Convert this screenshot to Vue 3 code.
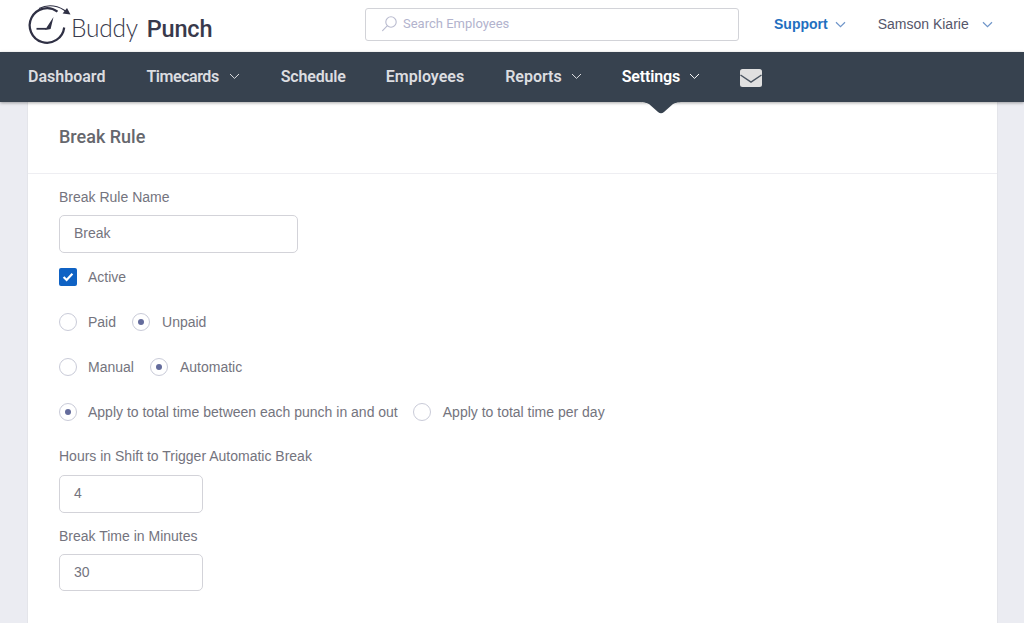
<script setup>
const navItems = [
  { label: 'Dashboard', caret: false, cls: 'first' },
  { label: 'Timecards', caret: true, cls: 'tight-lg' },
  { label: 'Schedule', caret: false, cls: 'tight-sm' },
  { label: 'Employees', caret: false, cls: 'first' },
  { label: 'Reports', caret: true, cls: 'near' },
  { label: 'Settings', caret: true, cls: 'active tight-sm near' }
]
const radioRows = [
  { tight: false, opts: [{ label: 'Paid', on: false }, { label: 'Unpaid', on: true }] },
  { tight: false, opts: [{ label: 'Manual', on: false }, { label: 'Automatic', on: true }] },
  { tight: true, opts: [{ label: 'Apply to total time between each punch in and out', on: true }, { label: 'Apply to total time per day', on: false }] }
]
</script>

<template>
  <div class="page">
    <header class="top">
      <div class="logo">
        <svg class="logo-mark" width="46" height="46" viewBox="0 0 46 46" fill="none">
          <path d="M31.5 8.7A17.3 17.3 0 1 0 38.2 24.5" stroke="#2f3044" stroke-width="2.2" />
          <path d="M13 5.5C22 1 33 2 41 9.5" stroke="#2f3044" stroke-width="1.1" />
          <path d="M44.5 11.5L36.6 10.4L41 5Z" fill="#2f3044" />
          <path d="M27.5 14L24.6 26.1L19 26.9L20.6 24.5Z" fill="#2f3044" />
          <path d="M10.5 24.9L20 24.9L20 26.7L10.5 26.7Z" fill="#2f3044" />
        </svg>
        <span class="logo-text">Buddy <b>Punch</b></span>
      </div>
      <div class="search">
        <svg width="17" height="17" viewBox="0 0 17 17" fill="none" stroke="#b9bbcf" stroke-width="1.1">
          <circle cx="10" cy="7" r="5.2" />
          <path d="M6.2 10.8L1.6 15.6" stroke-linecap="round" />
        </svg>
        <span>Search Employees</span>
      </div>
      <div class="support">
        <span>Support</span>
        <svg width="11" height="7" viewBox="0 0 11 7" fill="none" stroke="#6f95c9" stroke-width="1.2"><path d="M1 1.2L5.5 5.6L10 1.2" /></svg>
      </div>
      <div class="user">
        <span>Samson Kiarie</span>
        <svg width="11" height="7" viewBox="0 0 11 7" fill="none" stroke="#6f95c9" stroke-width="1.2"><path d="M1 1.2L5.5 5.6L10 1.2" /></svg>
      </div>
    </header>

    <nav class="nav">
      <div v-for="item in navItems" :key="item.label" class="nav-item" :class="item.cls">
        <span>{{ item.label }}</span>
        <svg v-if="item.caret" width="11" height="7" viewBox="0 0 11 7" fill="none" stroke="currentColor" stroke-width="1"><path d="M1 1L5.5 5.4L10 1" /></svg>
      </div>
      <svg class="mail" width="22" height="18" viewBox="0 0 22 18">
        <rect x="0" y="0" width="22" height="18" rx="2.5" fill="#e0e0e0" />
        <path d="M0.5 6L11 13.2L21.5 6" fill="none" stroke="#4a5460" stroke-width="1.5" />
      </svg>
      <svg class="notch" width="44" height="12" viewBox="0 0 44 12">
        <path d="M0 0C6 0 8 1 10 2L19 10Q22 12.5 25 10L34 2C36 1 38 0 44 0Z" fill="#37424f" />
      </svg>
    </nav>

    <main class="card">
      <h1 class="card-title">Break Rule</h1>
      <form class="form">
        <label class="label first">Break Rule Name</label>
        <div class="input wide">Break</div>

        <div class="check-row">
          <span class="checkbox">
            <svg width="12" height="10" viewBox="0 0 12 10" fill="none" stroke="#fff" stroke-width="2.2"><path d="M1.6 5L4.6 8L10.4 1.8" /></svg>
          </span>
          <span>Active</span>
        </div>

        <div v-for="(row, i) in radioRows" :key="i" class="radio-row" :class="{ tight: row.tight }">
          <div v-for="opt in row.opts" :key="opt.label" class="radio-opt">
            <span class="radio" :class="{ on: opt.on }"></span>
            <span>{{ opt.label }}</span>
          </div>
        </div>

        <label class="label hours">Hours in Shift to Trigger Automatic Break</label>
        <div class="input narrow">4</div>
        <label class="label minutes">Break Time in Minutes</label>
        <div class="input narrow short">30</div>
      </form>
    </main>
  </div>
</template>

<style>
html, body { margin: 0; height: 100%; overflow: hidden; background: #ebecf2; }
</style>

<style scoped>
.page {
  width: 1024px;
  height: 623px;
  overflow: hidden;
  background: #ebecf2;
  font-family: "Liberation Sans", Arial, sans-serif;
  font-size: 14px;
  color: #74747e;
}
.top {
  height: 52px;
  background: #fff;
  display: flex;
  align-items: center;
  box-sizing: border-box;
  padding-left: 26px;
}
.logo {
  width: 339px;
  height: 52px;
  display: flex;
  align-items: center;
  flex: none;
}
.logo-mark { flex: none; margin-top: -1px; }
.logo-text {
  font-family: Lato, sans-serif;
  font-size: 24.5px;
  font-weight: 300;
  color: #38394b;
  margin-top: 3px;
  margin-left: -1px;
  letter-spacing: -0.2px;
}
.logo-text b {
  font-family: Roboto, sans-serif;
  font-weight: 500;
  font-size: 23.5px;
  margin-left: 3px;
}
.search {
  width: 374px;
  height: 33px;
  box-sizing: border-box;
  border: 1px solid #d2d3d8;
  border-radius: 3px;
  display: flex;
  align-items: center;
  gap: 5px;
  padding: 0 0 2px 15px;
  color: #b2b3cd;
  font-family: Roboto, sans-serif;
  font-size: 13px;
  flex: none;
  margin-top: -4px;
}
.support {
  margin-left: 35px;
  display: flex;
  align-items: center;
  gap: 7px;
  color: #1f6fc0;
  font-weight: 700;
  font-size: 14px;
  margin-top: -4px;
}
.user {
  margin-left: 32px;
  display: flex;
  align-items: center;
  gap: 13px;
  color: #55566a;
  font-size: 14px;
  margin-top: -4px;
}
.nav {
  position: relative;
  height: 50px;
  box-sizing: border-box;
  padding: 0 0 1px 28px;
  background: #37424f;
  box-shadow: 0 1px 3px rgba(0, 0, 0, 0.35);
  display: flex;
  align-items: center;
  gap: 40px;
  z-index: 1;
}
.nav-item {
  display: flex;
  align-items: center;
  gap: 10px;
  color: #dcdde0;
  font-family: Roboto, sans-serif;
  font-size: 16px;
  font-weight: 600;
}
.nav-item.first { margin-right: 1px; }
.nav-item.tight-lg { margin-right: 1px; }
.nav-item.tight-lg span { letter-spacing: -0.45px; }
.nav-item.tight-sm span { letter-spacing: -0.15px; }
.nav-item.near { gap: 9px; }
.nav-item.active { color: #fff; }
.mail { margin: 3px 0 0 0; }
.notch {
  position: absolute;
  left: 639px;
  top: 50px;
}
.card {
  width: 971px;
  height: 540px;
  margin-left: 27px;
  background: #fff;
  border-left: 1px solid #e4e5ea;
  border-right: 1px solid #e4e5ea;
  box-sizing: border-box;
}
.card-title {
  margin: 0;
  height: 72px;
  box-sizing: border-box;
  border-bottom: 1px solid #eeeef2;
  padding: 23px 0 0 31px;
  font-family: Roboto, sans-serif;
  font-size: 18px;
  line-height: 24px;
  font-weight: 500;
  color: #66676d;
}
.form {
  padding-left: 31px;
  display: flex;
  flex-direction: column;
  align-items: flex-start;
}
.label { display: block; line-height: 18px; }
.label.first { margin-top: 14px; }
.label.hours { margin-top: 26px; }
.label.minutes { margin-top: 14px; }
.input {
  box-sizing: border-box;
  height: 38px;
  margin-top: 9px;
  border: 1px solid #d3d3d9;
  border-radius: 5px;
  padding: 0 0 2px 14px;
  display: flex;
  align-items: center;
}
.label.hours + .input { margin-top: 10px; }
.input.wide { width: 239px; }
.input.narrow { width: 144px; }
.input.short { height: 37px; }
.check-row {
  display: flex;
  align-items: center;
  gap: 11px;
  height: 18px;
  margin-top: 15px;
}
.checkbox {
  width: 18px;
  height: 18px;
  border-radius: 2px;
  background: #0f62c4;
  display: flex;
  align-items: center;
  justify-content: center;
}
.radio-row {
  display: flex;
  align-items: center;
  gap: 16px;
  height: 18px;
  margin-top: 27px;
}
.radio-row.tight { gap: 15px; }
.radio-opt {
  display: flex;
  align-items: center;
  gap: 11px;
}
.radio-opt + .radio-opt { gap: 12px; }
.radio {
  position: relative;
  display: block;
  width: 18px;
  height: 18px;
  box-sizing: border-box;
  border: 1px solid #c9cbd8;
  border-radius: 50%;
  background: #fff;
}
.radio.on::after {
  content: "";
  position: absolute;
  left: 5px;
  top: 5px;
  width: 6px;
  height: 6px;
  border-radius: 50%;
  background: #646c9c;
}
</style>
